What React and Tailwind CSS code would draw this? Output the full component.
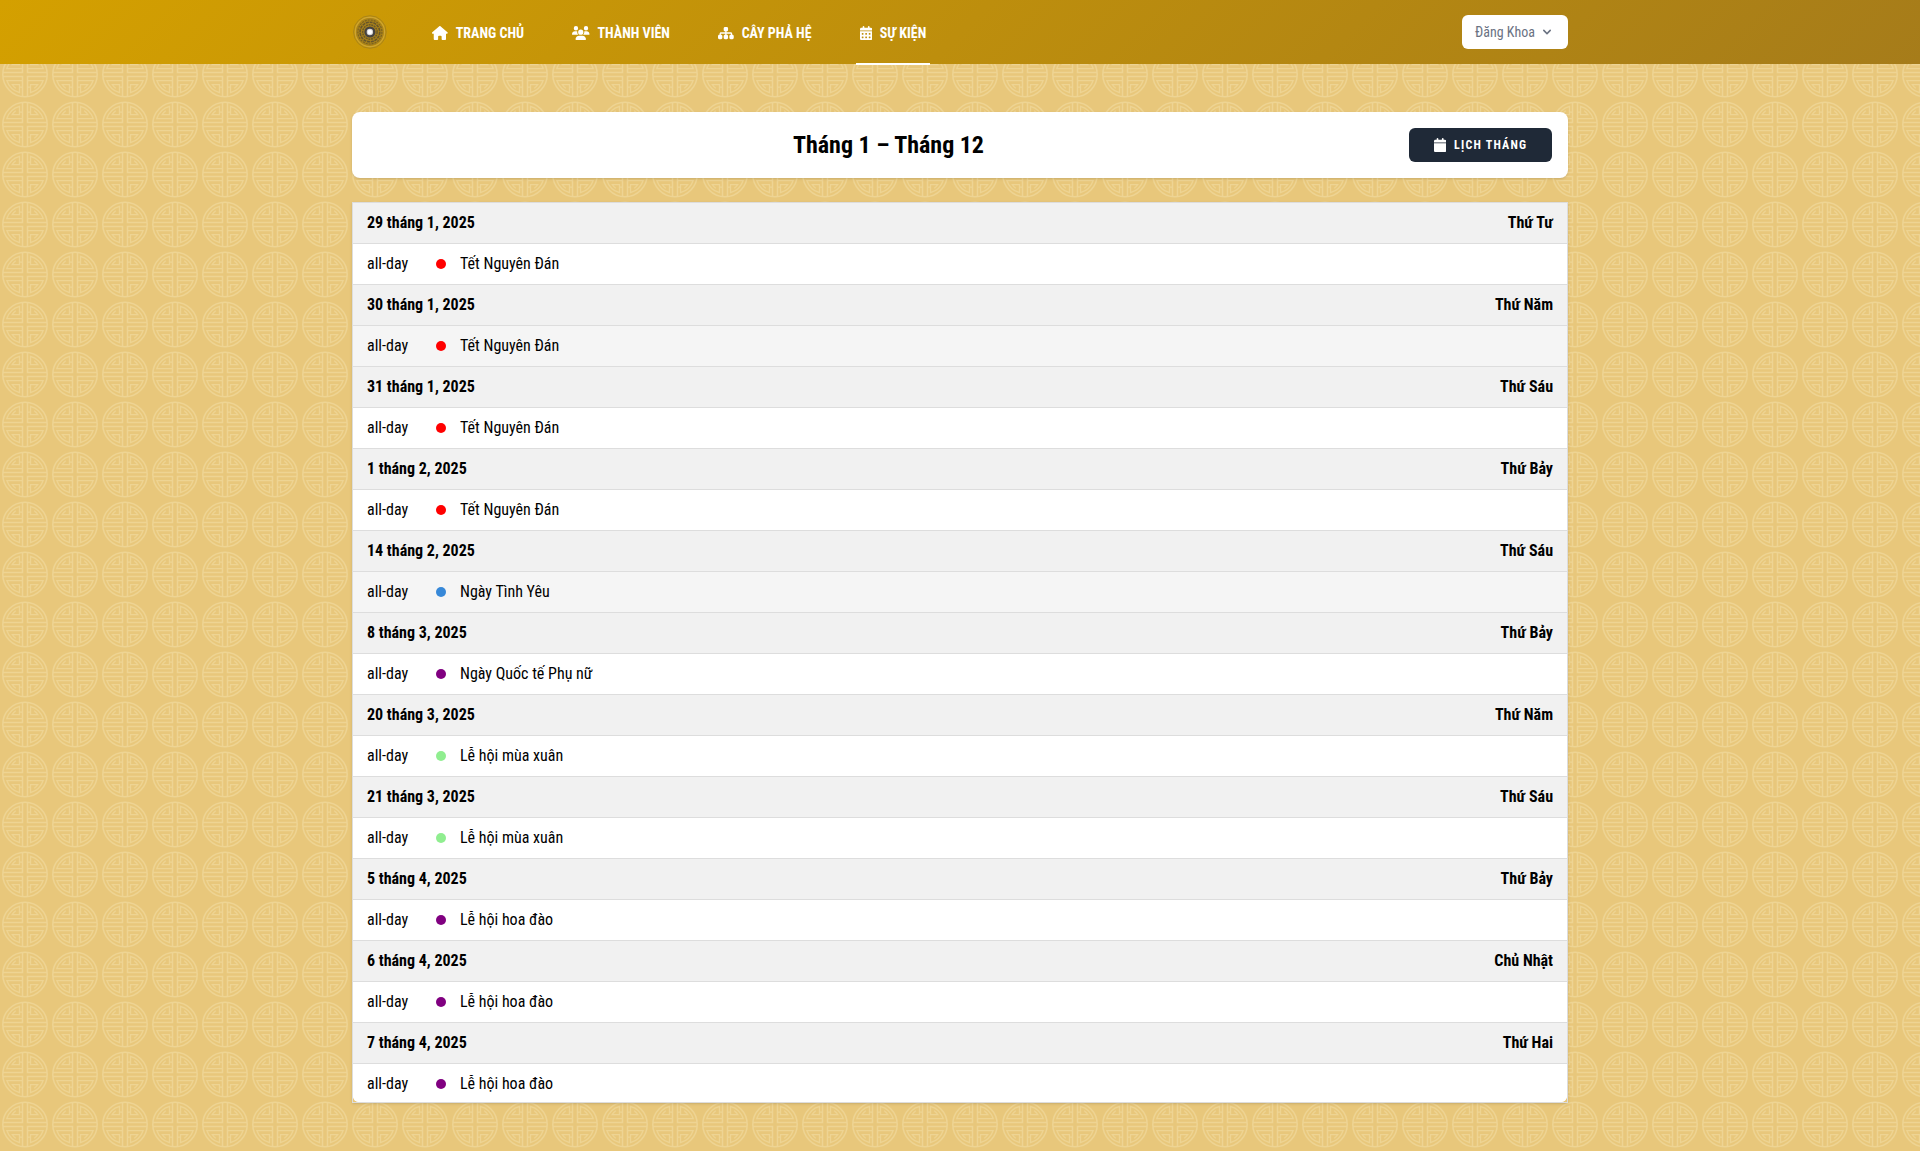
import { FaHouse, FaUsers, FaSitemap, FaCalendarDays, FaCalendar } from "react-icons/fa6";

const links = [
  { label: "Trang chủ", Icon: FaHouse, iconWidth: "w-[15.75px]" },
  { label: "Thành viên", Icon: FaUsers, iconWidth: "w-[17.5px]" },
  { label: "Cây phả hệ", Icon: FaSitemap, iconWidth: "w-[15.75px]" },
  { label: "Sự kiện", Icon: FaCalendarDays, iconWidth: "w-[12.25px]", active: true },
];

const RED = "bg-[#ff0000]";
const PURPLE = "bg-[#800080]";
const GREEN = "bg-[#90ee90]";

const days = [
  { date: "29 tháng 1, 2025", day: "Thứ Tư", title: "Tết Nguyên Đán", dot: RED },
  { date: "30 tháng 1, 2025", day: "Thứ Năm", title: "Tết Nguyên Đán", dot: RED, shaded: true },
  { date: "31 tháng 1, 2025", day: "Thứ Sáu", title: "Tết Nguyên Đán", dot: RED },
  { date: "1 tháng 2, 2025", day: "Thứ Bảy", title: "Tết Nguyên Đán", dot: RED },
  { date: "14 tháng 2, 2025", day: "Thứ Sáu", title: "Ngày Tình Yêu", dot: "bg-[#3788d8]", shaded: true },
  { date: "8 tháng 3, 2025", day: "Thứ Bảy", title: "Ngày Quốc tế Phụ nữ", dot: PURPLE },
  { date: "20 tháng 3, 2025", day: "Thứ Năm", title: "Lễ hội mùa xuân", dot: GREEN },
  { date: "21 tháng 3, 2025", day: "Thứ Sáu", title: "Lễ hội mùa xuân", dot: GREEN },
  { date: "5 tháng 4, 2025", day: "Thứ Bảy", title: "Lễ hội hoa đào", dot: PURPLE },
  { date: "6 tháng 4, 2025", day: "Chủ Nhật", title: "Lễ hội hoa đào", dot: PURPLE },
  { date: "7 tháng 4, 2025", day: "Thứ Hai", title: "Lễ hội hoa đào", dot: PURPLE },
];

function Quarter({ transform }) {
  return (
    <g transform={transform}>
      <path d="M-2.5 -22V-2H-22" strokeWidth="1.5" />
      <path
        d="M-2.5 -6H-18.2A19 19 0 0 1 -5.5 -18.2V-10H-12.8A14 14 0 0 1 -9.2 -13.8M-2.5 -12.5H-5.5"
        strokeWidth="1.25"
      />
    </g>
  );
}

function PatternBackground() {
  return (
    <svg className="absolute inset-0 -z-10 h-full w-full" aria-hidden="true">
      <defs>
        <pattern id="medallion" width="50" height="50" patternUnits="userSpaceOnUse">
          <g transform="translate(25 24.5)" fill="none" stroke="#eed493" strokeWidth="1.5">
            <circle r="22.2" />
            <Quarter />
            <Quarter transform="scale(-1 1)" />
            <Quarter transform="scale(1 -1)" />
            <Quarter transform="scale(-1 -1)" />
          </g>
        </pattern>
      </defs>
      <rect width="100%" height="100%" fill="url(#medallion)" />
    </svg>
  );
}

function Logo() {
  return (
    <svg className="size-9" viewBox="0 0 36 36" fill="none" aria-hidden="true">
      <circle cx="17.9" cy="18" r="16.3" stroke="#a9841a" strokeWidth="1" />
      <circle cx="17.9" cy="18" r="14.6" stroke="#cda536" strokeWidth="1.2" />
      <circle cx="17.9" cy="18" r="13.9" fill="#a9821a" />
      <circle cx="17.9" cy="18" r="12" stroke="#7a6220" strokeWidth="1.2" strokeDasharray="2 1" />
      <circle cx="17.9" cy="18" r="9.8" stroke="#66552a" strokeWidth="1.6" strokeDasharray="3 .8" />
      <circle cx="17.9" cy="18" r="7.2" stroke="#6a5828" strokeWidth="1.5" strokeDasharray="2 .7" />
      <circle cx="17.9" cy="18" r="5.6" fill="#464340" />
      <circle cx="17.9" cy="18" r="3.2" fill="#d5d5d5" />
      <circle cx="17.9" cy="18" r="2.2" fill="#fff" />
    </svg>
  );
}

function NavBar() {
  return (
    <nav className="h-16 bg-[linear-gradient(135deg,#d4a000,#a67c1a)]">
      <div className="mx-auto flex h-16 w-[1216px] items-center justify-between">
        <div className="flex items-center gap-10">
          <Logo />
          {links.map(({ label, Icon, iconWidth, active }) => (
            <a
              key={label}
              className={`-mb-px flex h-[65px] items-center gap-2 border-b-2 px-1 pt-0.5 text-sm font-bold uppercase leading-5 text-white ${
                active ? "border-white" : "border-transparent"
              }`}
            >
              <Icon className={`h-3.5 ${iconWidth}`} />
              {label}
            </a>
          ))}
        </div>
        <button className="flex items-center rounded-md border border-transparent bg-white px-3 py-2 text-sm leading-4 text-gray-500">
          {"Đăng Khoa"}
          <svg className="ml-1 size-4" viewBox="0 0 20 20" fill="currentColor">
            <path
              fillRule="evenodd"
              clipRule="evenodd"
              d="M5.293 7.293a1 1 0 011.414 0L10 10.586l3.293-3.293a1 1 0 111.414 1.414l-4 4a1 1 0 01-1.414 0l-4-4a1 1 0 010-1.414z"
            />
          </svg>
        </button>
      </div>
    </nav>
  );
}

export default function App() {
  return (
    <div className="relative isolate min-h-[1151px] bg-[#e8c77b] font-['Roboto_Condensed','Roboto',sans-serif] text-base text-black [font-stretch:75%]">
      <PatternBackground />
      <NavBar />
      <main className="mx-auto w-[1216px] pt-12">
        <header className="flex h-[66px] items-center rounded-lg bg-white px-4 shadow">
          <h1 className="flex-1 text-center text-2xl font-bold">Tháng 1 – Tháng 12</h1>
          <button className="flex h-[34px] w-[143px] items-center justify-center gap-2 rounded-md bg-[#1f2937] text-xs font-bold uppercase tracking-widest text-white">
            <FaCalendar className="h-3.5 w-[12.25px]" />
            Lịch tháng
          </button>
        </header>
        <section className="mt-6 h-[901px] border border-[#ddd] shadow">
          <div className="h-full overflow-hidden rounded-b-md bg-white">
            {days.map(({ date, day, title, dot, shaded }) => (
              <div key={date}>
                <div className="flex h-[41px] items-center justify-between border-b border-[#ddd] bg-[#f1f1f1] px-3.5 font-bold">
                  <span>{date}</span>
                  <span>{day}</span>
                </div>
                <div
                  className={`flex h-[41px] items-center border-b border-[#ddd] px-3.5 ${shaded ? "bg-[#f5f5f5]" : "bg-white"}`}
                >
                  <span className="w-[69px]">all-day</span>
                  <span className={`mr-3.5 size-2.5 rounded-full ${dot}`} />
                  <span>{title}</span>
                </div>
              </div>
            ))}
          </div>
        </section>
      </main>
    </div>
  );
}
